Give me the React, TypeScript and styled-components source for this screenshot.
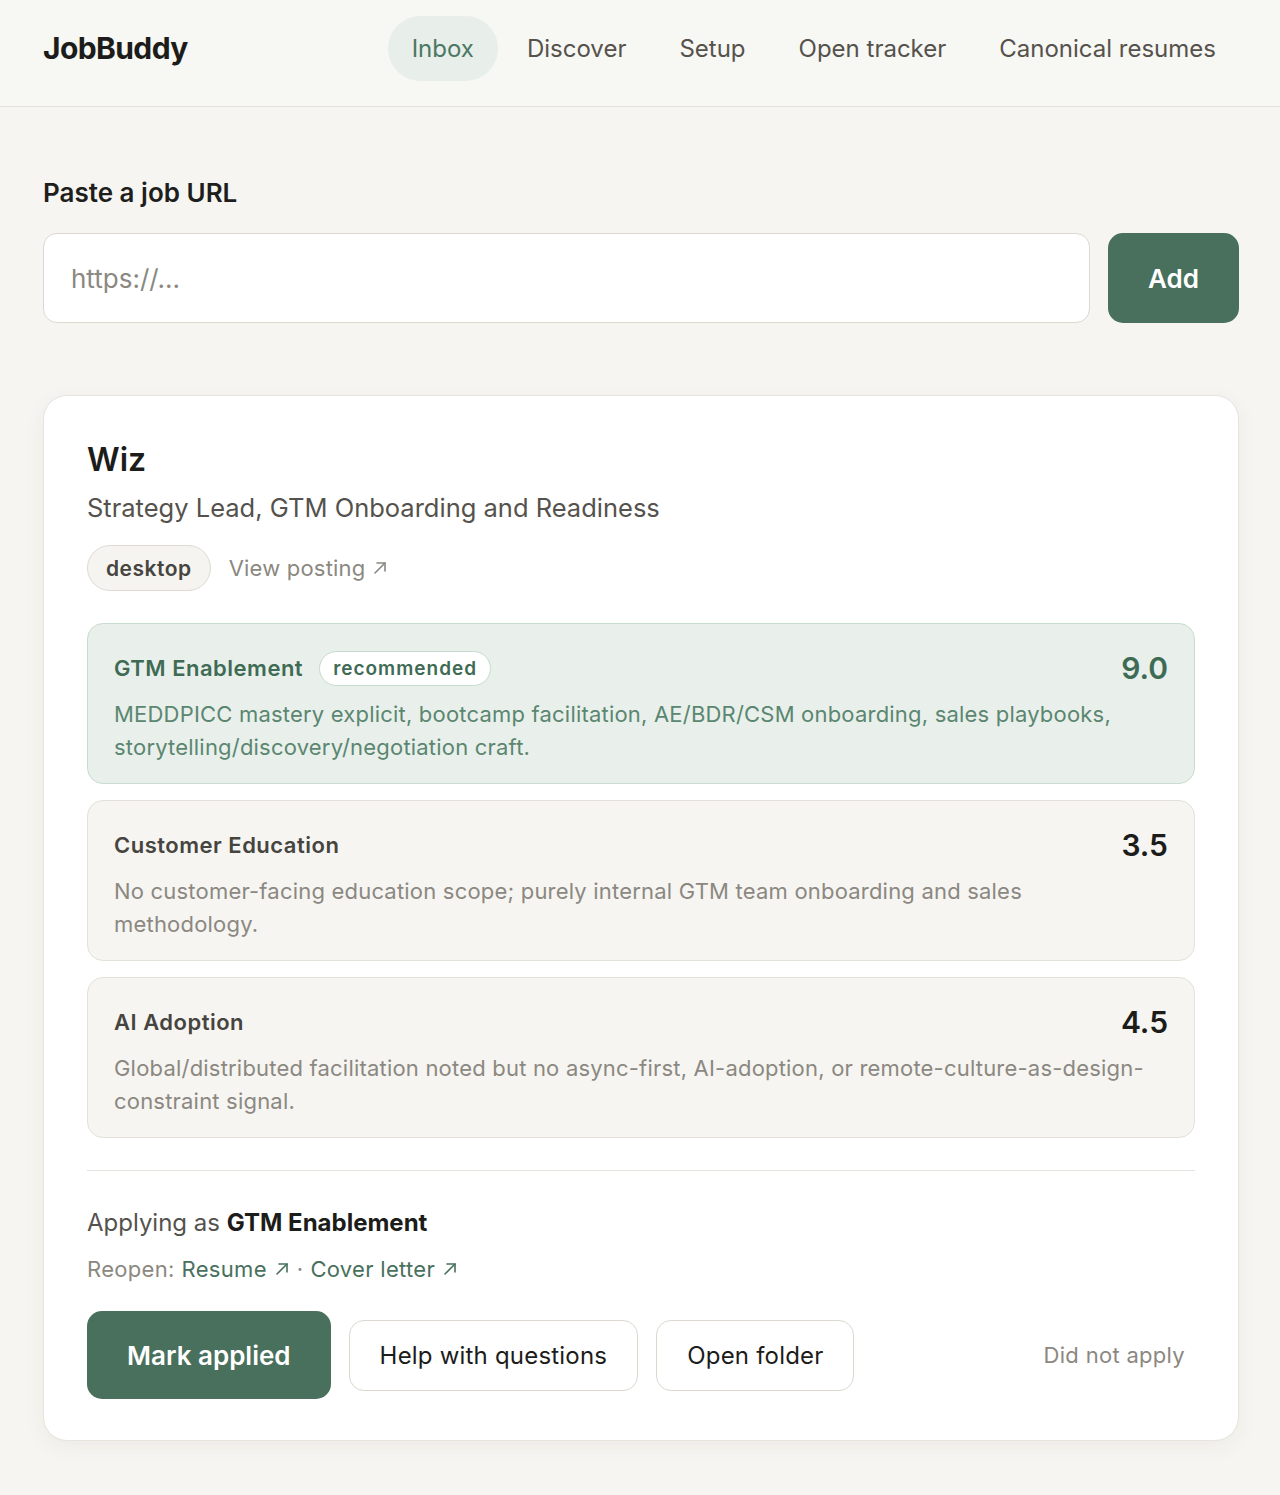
import type { FC } from 'react';
import styled, { createGlobalStyle } from 'styled-components';

const GlobalStyle = createGlobalStyle`
  * {
    margin: 0;
    padding: 0;
    box-sizing: border-box;
  }

  body {
    font-family: 'Inter', 'Liberation Sans', sans-serif;
    background: #f6f5f1;
    color: #222;
  }
`;

const Page = styled.div`
  min-height: 1495px;
  background: #f6f5f1;
`;

const Header = styled.header`
  height: 107px;
  display: flex;
  align-items: center;
  justify-content: space-between;
  padding: 0 40px 10px 43px;
  background: #f7f7f3;
  border-bottom: 1px solid #e4e2dc;
`;

const Logo = styled.div`
  font-size: 30px;
  font-weight: 700;
  letter-spacing: -0.6px;
  color: #1c1c1a;
`;

const Nav = styled.nav`
  display: flex;
  align-items: center;
  gap: 5px;
`;

const NavItem = styled.a<{ $active?: boolean }>`
  display: flex;
  align-items: center;
  height: 65px;
  padding: 0 24px;
  border-radius: 33px;
  font-size: 24px;
  color: ${(p) => (p.$active ? '#4b7863' : '#55524d')};
  background: ${(p) => (p.$active ? '#e8eeea' : 'transparent')};
  text-decoration: none;
  cursor: pointer;
`;

const Main = styled.main`
  padding: 70px 41px 56px 43px;
`;

const Label = styled.h2`
  font-size: 26px;
  line-height: 32px;
  font-weight: 600;
  color: #1e1e1c;
`;

const UrlRow = styled.div`
  display: flex;
  gap: 18px;
  margin-top: 24px;
`;

const UrlInput = styled.input`
  flex: 1;
  height: 90px;
  border: 1.5px solid #dcd8d0;
  border-radius: 14px;
  background: #fff;
  padding: 0 27px;
  font-family: inherit;
  font-size: 26px;
  color: #222;
  outline: none;

  &::placeholder {
    color: #8b8881;
  }
`;

const PrimaryButton = styled.button<{ $height: number; $width?: number }>`
  height: ${(p) => p.$height}px;
  ${(p) => (p.$width ? `width: ${p.$width}px;` : 'padding: 0 40px;')}
  border: none;
  border-radius: 15px;
  background: #48705c;
  color: #fff;
  font-family: inherit;
  font-size: 26px;
  font-weight: 600;
  cursor: pointer;
`;

const Card = styled.section`
  margin-top: 72px;
  background: #fff;
  border: 1px solid #e7e4de;
  border-radius: 24px;
  padding: 44px 43px 41px 43px;
  box-shadow: 0 6px 22px rgba(60, 50, 30, 0.05);
`;

const Company = styled.h1`
  font-size: 32px;
  line-height: 40px;
  font-weight: 600;
  color: #1c1c1a;
`;

const JobTitle = styled.p`
  margin-top: 10px;
  font-size: 25.5px;
  line-height: 36px;
  color: #55524d;
`;

const MetaRow = styled.div`
  display: flex;
  align-items: center;
  gap: 18px;
  margin-top: 19px;
`;

const Chip = styled.span`
  display: inline-flex;
  align-items: center;
  height: 46px;
  padding: 0 18px;
  border: 1.5px solid #dedad2;
  border-radius: 23px;
  background: #f5f4f0;
  font-size: 21px;
  font-weight: 600;
  letter-spacing: 0.5px;
  color: #46443f;
`;

const MutedLink = styled.a`
  display: inline-flex;
  align-items: center;
  gap: 7px;
  font-size: 22px;
  letter-spacing: 0.2px;
  color: #8b8881;
  text-decoration: none;
`;

const RoleList = styled.div`
  display: flex;
  flex-direction: column;
  gap: 16px;
  margin-top: 32px;
`;

const RoleBox = styled.div<{ $featured?: boolean }>`
  height: 161px;
  padding: 24px 26px 20px;
  border-radius: 16px;
  border: 1.5px solid ${(p) => (p.$featured ? '#c8dccf' : '#e4e1da')};
  background: ${(p) => (p.$featured ? '#e9f0eb' : '#f6f5f1')};
`;

const RoleHead = styled.div`
  display: flex;
  align-items: center;
  height: 40px;
`;

const RoleName = styled.span<{ $featured?: boolean }>`
  font-size: 22px;
  font-weight: 600;
  letter-spacing: 0.5px;
  color: ${(p) => (p.$featured ? '#3f6b55' : '#46443f')};
`;

const Badge = styled.span`
  display: inline-flex;
  align-items: center;
  height: 35px;
  margin-left: 16px;
  padding: 0 13px;
  border: 1.5px solid #c6dbcd;
  border-radius: 18px;
  background: #fff;
  font-size: 19px;
  font-weight: 600;
  letter-spacing: 1px;
  color: #3f6b55;
`;

const Score = styled.span<{ $featured?: boolean }>`
  margin-left: auto;
  font-size: 30px;
  font-weight: 600;
  color: ${(p) => (p.$featured ? '#3f6b55' : '#1c1c1a')};
`;

const RoleDesc = styled.p<{ $featured?: boolean }>`
  margin-top: 10px;
  font-size: 22px;
  line-height: 33px;
  letter-spacing: 0.2px;
  color: ${(p) => (p.$featured ? '#5b8670' : '#8b8881')};
`;

const Divider = styled.hr`
  margin-top: 32px;
  border: none;
  border-top: 1.5px solid #e6e3dc;
`;

const Applying = styled.p`
  margin-top: 35px;
  font-size: 24px;
  line-height: 34px;
  color: #55524d;

  strong {
    font-weight: 700;
    color: #1c1c1a;
  }
`;

const Reopen = styled.p`
  display: flex;
  align-items: center;
  gap: 7px;
  margin-top: 13px;
  font-size: 22px;
  line-height: 32px;
  letter-spacing: 0.3px;
  color: #8b8881;
`;

const GreenLink = styled.a`
  display: inline-flex;
  align-items: center;
  gap: 7px;
  color: #48705c;
  text-decoration: none;
`;

const Actions = styled.div`
  display: flex;
  align-items: center;
  gap: 18px;
  margin-top: 26px;
`;

const OutlineButton = styled.button`
  height: 71px;
  padding: 0 30px;
  border: 1.5px solid #dcd8d0;
  border-radius: 15px;
  background: #fff;
  font-family: inherit;
  font-size: 24px;
  letter-spacing: 0.2px;
  color: #1c1c1a;
  cursor: pointer;
`;

const GhostButton = styled.button`
  margin-left: auto;
  margin-right: 10px;
  border: none;
  background: none;
  font-family: inherit;
  font-size: 22px;
  letter-spacing: 0.3px;
  color: #8b8881;
  cursor: pointer;
`;

const Arrow: FC<{ size?: number }> = ({ size = 16 }) => (
  <svg width={size} height={size} viewBox="0 0 16 16" fill="none" stroke="currentColor" strokeWidth="1.6" strokeLinecap="round" strokeLinejoin="round">
    <path d="M3 13L13 3" />
    <path d="M5 3H13V11" />
  </svg>
);

const roles = [
  {
    name: 'GTM Enablement',
    score: '9.0',
    featured: true,
    desc: 'MEDDPICC mastery explicit, bootcamp facilitation, AE/BDR/CSM onboarding, sales playbooks, storytelling/discovery/negotiation craft.',
  },
  {
    name: 'Customer Education',
    score: '3.5',
    featured: false,
    desc: 'No customer-facing education scope; purely internal GTM team onboarding and sales methodology.',
  },
  {
    name: 'AI Adoption',
    score: '4.5',
    featured: false,
    desc: 'Global/distributed facilitation noted but no async-first, AI-adoption, or remote-culture-as-design-constraint signal.',
  },
];

const App: FC = () => {
  return (
    <Page>
      <GlobalStyle />
      <Header>
        <Logo>JobBuddy</Logo>
        <Nav>
          <NavItem $active>Inbox</NavItem>
          <NavItem>Discover</NavItem>
          <NavItem>Setup</NavItem>
          <NavItem>Open tracker</NavItem>
          <NavItem>Canonical resumes</NavItem>
        </Nav>
      </Header>

      <Main>
        <Label>Paste a job URL</Label>
        <UrlRow>
          <UrlInput placeholder="https://..." />
          <PrimaryButton $height={90} $width={131}>Add</PrimaryButton>
        </UrlRow>

        <Card>
          <Company>Wiz</Company>
          <JobTitle>Strategy Lead, GTM Onboarding and Readiness</JobTitle>
          <MetaRow>
            <Chip>desktop</Chip>
            <MutedLink>
              View posting <Arrow />
            </MutedLink>
          </MetaRow>

          <RoleList>
            {roles.map((r) => (
              <RoleBox key={r.name} $featured={r.featured}>
                <RoleHead>
                  <RoleName $featured={r.featured}>{r.name}</RoleName>
                  {r.featured && <Badge>recommended</Badge>}
                  <Score $featured={r.featured}>{r.score}</Score>
                </RoleHead>
                <RoleDesc $featured={r.featured}>{r.desc}</RoleDesc>
              </RoleBox>
            ))}
          </RoleList>

          <Divider />

          <Applying>
            Applying as <strong>GTM Enablement</strong>
          </Applying>
          <Reopen>
            Reopen:
            <GreenLink>
              Resume <Arrow />
            </GreenLink>
            ·
            <GreenLink>
              Cover letter <Arrow />
            </GreenLink>
          </Reopen>

          <Actions>
            <PrimaryButton $height={88}>Mark applied</PrimaryButton>
            <OutlineButton>Help with questions</OutlineButton>
            <OutlineButton>Open folder</OutlineButton>
            <GhostButton>Did not apply</GhostButton>
          </Actions>
        </Card>
      </Main>
    </Page>
  );
};

export default App;
